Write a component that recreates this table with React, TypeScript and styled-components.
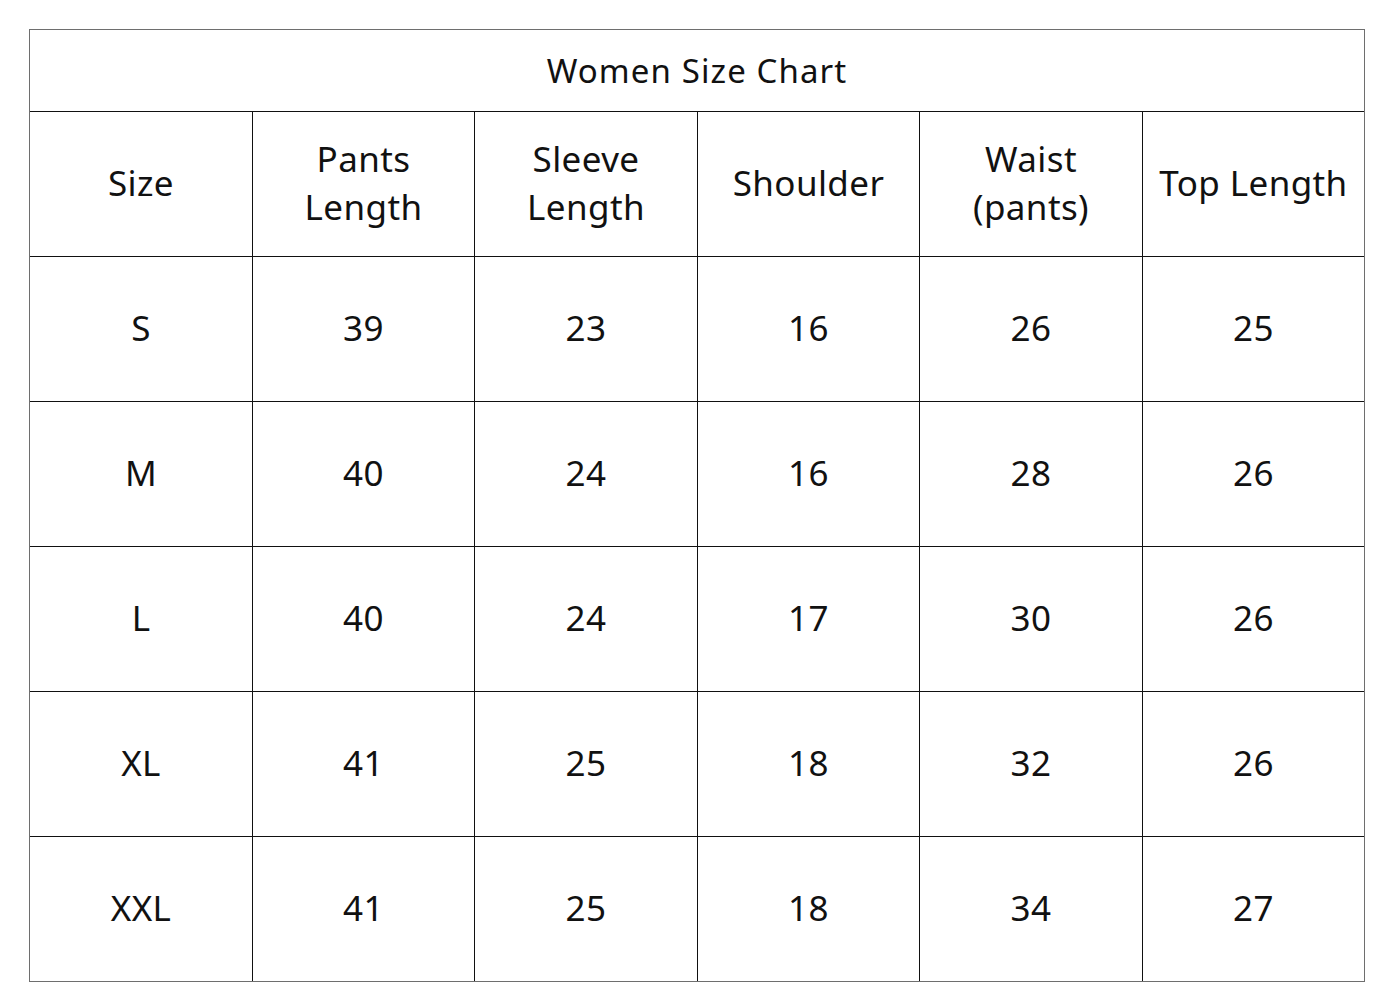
import React from "react";
import styled, { createGlobalStyle } from "styled-components";

const Global = createGlobalStyle`
  html, body { margin: 0; padding: 0; background: #ffffff; }
  body { font-family: "Noto Sans", "Open Sans", sans-serif; color: #111; }
`;

const Page = styled.div`
  width: 1400px;
  height: 1000px;
  padding: 29px 0 0 29px;
  box-sizing: border-box;
  background: #fff;
`;

const Chart = styled.div`
  display: grid;
  grid-template-columns: 222px 221px 222px 221px 222px 221px;
  grid-template-rows: 81px 144px repeat(5, 144px);
  gap: 1px;
  background: #111;
  border: 1px solid #6e6e6e;
  width: max-content;
`;

const Title = styled.div`
  grid-column: 1 / -1;
  background: #fff;
  display: flex;
  align-items: center;
  justify-content: center;
  font-size: 33px;
  letter-spacing: 1.1px;
  padding-bottom: 1px;
`;

const Cell = styled.div`
  background: #fff;
  display: flex;
  align-items: center;
  justify-content: center;
  text-align: center;
  font-size: 35px;
  letter-spacing: 0.4px;
  line-height: 48px;
  padding-bottom: 2px;
  white-space: pre-line;
`;

const headers = ["Size", "Pants\nLength", "Sleeve\nLength", "Shoulder", "Waist\n(pants)", "Top Length"];
const rows = [
  ["S", "39", "23", "16", "26", "25"],
  ["M", "40", "24", "16", "28", "26"],
  ["L", "40", "24", "17", "30", "26"],
  ["XL", "41", "25", "18", "32", "26"],
  ["XXL", "41", "25", "18", "34", "27"],
];

export default function App() {
  return (
    <>
      <Global />
      <Page>
        <Chart>
          <Title>Women Size Chart</Title>
          {headers.map((h) => (
            <Cell key={h}>{h}</Cell>
          ))}
          {rows.map((r, i) =>
            r.map((v, j) => <Cell key={`${i}-${j}`}>{v}</Cell>)
          )}
        </Chart>
      </Page>
    </>
  );
}
